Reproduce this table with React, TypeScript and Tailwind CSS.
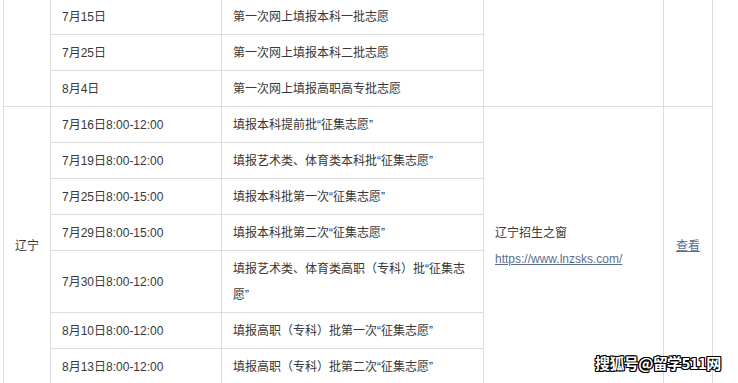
import React from 'react';

type Row = { date: string; task: string };

const topRows: Row[] = [
  { date: '7月15日', task: '第一次网上填报本科一批志愿' },
  { date: '7月25日', task: '第一次网上填报本科二批志愿' },
  { date: '8月4日', task: '第一次网上填报高职高专批志愿' },
];

const liaoningRows: Row[] = [
  { date: '7月16日8:00-12:00', task: '填报本科提前批“征集志愿”' },
  { date: '7月19日8:00-12:00', task: '填报艺术类、体育类本科批“征集志愿”' },
  { date: '7月25日8:00-15:00', task: '填报本科批第一次“征集志愿”' },
  { date: '7月29日8:00-15:00', task: '填报本科批第二次“征集志愿”' },
  { date: '7月30日8:00-12:00', task: '填报艺术类、体育类高职（专科）批“征集志愿”' },
  { date: '8月10日8:00-12:00', task: '填报高职（专科）批第一次“征集志愿”' },
  { date: '8月13日8:00-12:00', task: '填报高职（专科）批第二次“征集志愿”' },
];

const cell = 'border border-[#dcdcdc] px-[11px] pt-[5px] pb-[4px] align-middle';

export default function App() {
  return (
    <div className="relative h-[383px] w-[738px] overflow-hidden bg-white font-['Liberation_Sans','Noto_Sans_CJK_SC',sans-serif] text-[12px] leading-[26px] text-[#383838]">
      <table className="ml-[3px] mt-[-2px] w-[709px] table-fixed border-collapse">
        <colgroup>
          <col className="w-[47px]" />
          <col className="w-[171px]" />
          <col className="w-[262px]" />
          <col className="w-[180px]" />
          <col className="w-[49px]" />
        </colgroup>
        <tbody>
          {topRows.map((row, i) => (
            <tr key={row.date}>
              {i === 0 && <td rowSpan={3} className={cell} />}
              <td className={cell}>{row.date}</td>
              <td className={cell}>{row.task}</td>
              {i === 0 && <td rowSpan={3} className={cell} />}
              {i === 0 && <td rowSpan={3} className={cell} />}
            </tr>
          ))}
          {liaoningRows.map((row, i) => (
            <tr key={row.date}>
              {i === 0 && (
                <td rowSpan={7} className={`${cell} text-center`}>
                  辽宁
                </td>
              )}
              <td className={cell}>{row.date}</td>
              <td className={cell}>{row.task}</td>
              {i === 0 && (
                <td rowSpan={7} className={cell}>
                  <div>辽宁招生之窗</div>
                  <a href="#" className="text-[#5b6e8a] underline">
                    https://www.lnzsks.com/
                  </a>
                </td>
              )}
              {i === 0 && (
                <td rowSpan={7} className={`${cell} px-0 text-center`}>
                  <a href="#" className="text-[#5b6e8a] underline">
                    查看
                  </a>
                </td>
              )}
            </tr>
          ))}
        </tbody>
      </table>

      {/* watermark */}
      <div className="absolute left-[595px] top-[352px] font-['Noto_Sans_CJK_SC',sans-serif] text-[15px] font-bold leading-[22px] tracking-[-0.6px] text-white [text-shadow:1px_1px_0_#000,-1px_-1px_0_#000,1px_-1px_0_#000,-1px_1px_0_#000,0_1px_0_#000,1px_0_0_#000,0_-1px_0_#000,-1px_0_0_#000]">
        搜狐号@留学511网
      </div>
    </div>
  );
}
